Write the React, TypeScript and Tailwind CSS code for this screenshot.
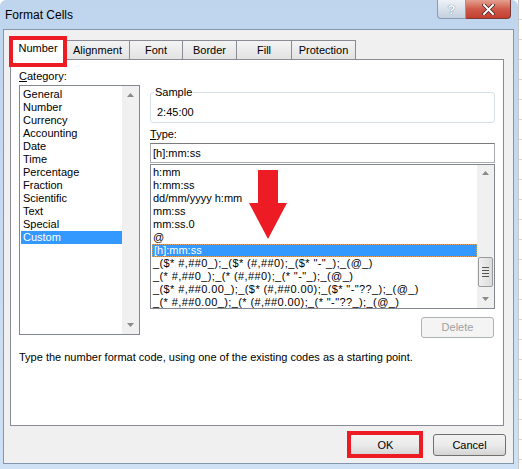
import React from "react";

const categories = [
  "General",
  "Number",
  "Currency",
  "Accounting",
  "Date",
  "Time",
  "Percentage",
  "Fraction",
  "Scientific",
  "Text",
  "Special",
  "Custom",
];

const types = [
  "h:mm",
  "h:mm:ss",
  "dd/mm/yyyy h:mm",
  "mm:ss",
  "mm:ss.0",
  "@",
  "[h]:mm:ss",
  '_($* #,##0_);_($* (#,##0);_($* "-"_);_(@_)',
  '_(* #,##0_);_(* (#,##0);_(* "-"_);_(@_)',
  '_($* #,##0.00_);_($* (#,##0.00);_($* "-"??_);_(@_)',
  '_(* #,##0.00_);_(* (#,##0.00);_(* "-"??_);_(@_)',
];

const tabs = [
  { label: "Number", w: "w-[56px]" },
  { label: "Alignment", w: "w-[65px]" },
  { label: "Font", w: "w-[54px]" },
  { label: "Border", w: "w-[55px]" },
  { label: "Fill", w: "w-[56px]" },
  { label: "Protection", w: "w-[65px]" },
];

function ArrowUp() {
  return (
    <svg width="7" height="4" viewBox="0 0 7 4">
      <path d="M0 4 L3.5 0 L7 4 Z" fill="#8a8a8a" />
    </svg>
  );
}

function ArrowDown() {
  return (
    <svg width="7" height="4" viewBox="0 0 7 4">
      <path d="M0 0 L3.5 4 L7 0 Z" fill="#8a8a8a" />
    </svg>
  );
}

function Button({ children, disabled }: { children: React.ReactNode; disabled?: boolean }) {
  return (
    <div
      className={`flex h-full w-full items-center justify-center rounded-[3px] border ${
        disabled
          ? "border-[#adb2b5] bg-[#f4f4f4] text-[#a0a0a0]"
          : "border-[#707070] bg-gradient-to-b from-[#f2f2f2] via-[#ebebeb] to-[#d4d4d4] text-black"
      }`}
    >
      {children}
    </div>
  );
}

export default function App() {
  return (
    <div
      className="flex h-[469px] w-[522px] overflow-hidden bg-white text-[11px] leading-[13px] text-black"
      style={{ fontFamily: '"Liberation Sans", Arial, sans-serif' }}
    >
      <div className="flex h-full w-[518px] flex-col rounded-t-[6px] bg-gradient-to-b from-[#bfd5ee] to-[#cfe1f4]">
        {/* title bar */}
        <div className="flex h-[29px] shrink-0 items-start pl-[5px] pr-[7px]">
          <span className="mt-[8px] text-[12px] leading-[14px]">Format Cells</span>
          <div className="ml-auto flex h-[19px]">
            <div className="flex w-[29px] items-center justify-center rounded-bl-[4px] border border-t-0 border-[#8a9ab0] bg-gradient-to-b from-[#eef2f7] to-[#c3d0de] text-[13px] font-bold text-white [text-shadow:0_0_1px_#33485f]">
              ?
            </div>
            <div className="flex w-[45px] items-center justify-center rounded-br-[4px] border border-l-0 border-t-0 border-[#7a3b36] bg-gradient-to-b from-[#e3a090] via-[#cf5a4a] to-[#c33f30]">
              <svg width="13" height="11" viewBox="0 0 13 11">
                <path d="M2 1 L11 10 M11 1 L2 10" stroke="#3a2020" strokeWidth="3.4" strokeLinecap="square" />
                <path d="M2 1 L11 10 M11 1 L2 10" stroke="#ffffff" strokeWidth="2" strokeLinecap="square" />
              </svg>
            </div>
          </div>
        </div>

        {/* client area */}
        <div className="ml-[3px] mr-[4px] flex h-[435px] flex-col border border-[#8396ad] bg-[#f0f0f0]">
          {/* tabs */}
          <div className="ml-[6px] mt-[6px] flex h-[23px] items-end">
            {tabs.map((t, i) =>
              i === 0 ? (
                <div
                  key={t.label}
                  className={`relative z-10 mb-[-1px] flex h-[23px] ${t.w} items-start justify-center border border-b-0 border-[#898c95] bg-white pt-[4px]`}
                >
                  {t.label}
                  <div className="absolute left-[-2px] top-[-2px] h-[31px] w-[58px] border-[4px] border-[#ed1c24]" />
                </div>
              ) : (
                <div
                  key={t.label}
                  className={`-ml-px flex h-[19px] ${t.w} items-center justify-center border border-b-0 border-[#898c95] bg-gradient-to-b from-[#f3f3f3] to-[#e3e3e3] pt-[1px]`}
                >
                  {t.label}
                </div>
              ),
            )}
          </div>

          {/* panel */}
          <div className="ml-[6px] mr-[9px] flex h-[367px] flex-col border border-[#898c95] bg-white px-[8px]">
            <div className="flex gap-[10px]">
              {/* category column */}
              <div className="flex flex-col pt-[10px]">
                <div>
                  <span className="underline">C</span>ategory:
                </div>
                <div className="mt-[2px] flex h-[250px] w-[121px] border border-[#828790]">
                  <div className="flex flex-1 flex-col pl-[1px] pt-[2px]">
                    {categories.map((c) => (
                      <div
                        key={c}
                        className={`h-[13px] pl-[2px] ${c === "Custom" ? "bg-[#3399ff] text-white" : ""}`}
                      >
                        {c}
                      </div>
                    ))}
                  </div>
                  <div className="flex w-[17px] flex-col items-center justify-between bg-[#f0f0f0] py-[7px]">
                    <ArrowUp />
                    <ArrowDown />
                  </div>
                </div>
              </div>

              {/* right column */}
              <div className="flex w-[346px] flex-col pt-[32px]">
                <div className="relative h-[31px] rounded-[3px] border border-[#d5dfe5] pl-[6px] pt-[13px]">
                  <span className="absolute left-[3px] top-[-7px] bg-white px-[1px]">Sample</span>
                  2:45:00
                </div>
                <div className="mt-[5px]">
                  <span className="underline">T</span>ype:
                </div>
                <div className="mt-[2px] flex h-[20px] items-center border border-[#abadb3] border-t-[#7a7a7a] pl-[2px]">
                  [h]:mm:ss
                </div>
                <div className="mt-[1px] flex h-[145px] border border-[#828790]">
                  <div className="flex flex-1 flex-col pl-[1px] pt-[1px]">
                    {types.map((t, i) => (
                      <div
                        key={t}
                        className={`h-[13px] whitespace-nowrap pl-[1px] ${i > 6 ? "tracking-[0.4px]" : ""} ${
                          t === "[h]:mm:ss" ? "border border-dotted border-[#e0a060] bg-[#3399ff] leading-[11px] text-white" : ""
                        }`}
                      >
                        {t}
                      </div>
                    ))}
                  </div>
                  <div className="flex w-[17px] flex-col items-center bg-[#f0f0f0] pb-[7px] pt-[6px]">
                    <ArrowUp />
                    <div className="mt-[82px] flex h-[30px] w-[15px] flex-col items-center justify-center gap-[2px] rounded-[2px] border border-[#9a9a9a] bg-gradient-to-r from-[#f0f0f0] to-[#dcdcdc]">
                      <div className="h-px w-[7px] bg-[#555]" />
                      <div className="h-px w-[7px] bg-[#555]" />
                      <div className="h-px w-[7px] bg-[#555]" />
                      <div className="h-px w-[7px] bg-[#555]" />
                    </div>
                    <div className="mt-auto">
                      <ArrowDown />
                    </div>
                  </div>
                </div>
                <div className="ml-auto mr-[1px] mt-[8px] h-[21px] w-[73px]">
                  <Button disabled>Delete</Button>
                </div>
              </div>
            </div>
            <div className="mt-[13px]">
              Type the number format code, using one of the existing codes as a starting point.
            </div>
          </div>

          {/* buttons */}
          <div className="mr-[7px] mt-[8px] flex justify-end gap-[11px]">
            <div className="relative h-[22px] w-[73px]">
              <Button>OK</Button>
              <div className="absolute left-[-2px] top-[-3px] h-[27px] w-[76px] border-[4px] border-[#ed1c24]" />
            </div>
            <div className="h-[22px] w-[73px]">
              <Button>Cancel</Button>
            </div>
          </div>
        </div>
      </div>
      <div className="flex flex-1 flex-col border-l border-[#c8c8c8]">
        {Array.from({ length: 23 }).map((_, i) => (
          <div key={i} className="h-[20px] border-b border-[#d8d8d8]" />
        ))}
      </div>

      {/* red arrow annotation */}
      <svg className="pointer-events-none absolute left-[248px] top-[170px]" width="40" height="70" viewBox="0 0 40 70">
        <path d="M10 0 H30 V33 H39 L20 69 L1 33 H10 Z" fill="#ed1c24" />
      </svg>
    </div>
  );
}
